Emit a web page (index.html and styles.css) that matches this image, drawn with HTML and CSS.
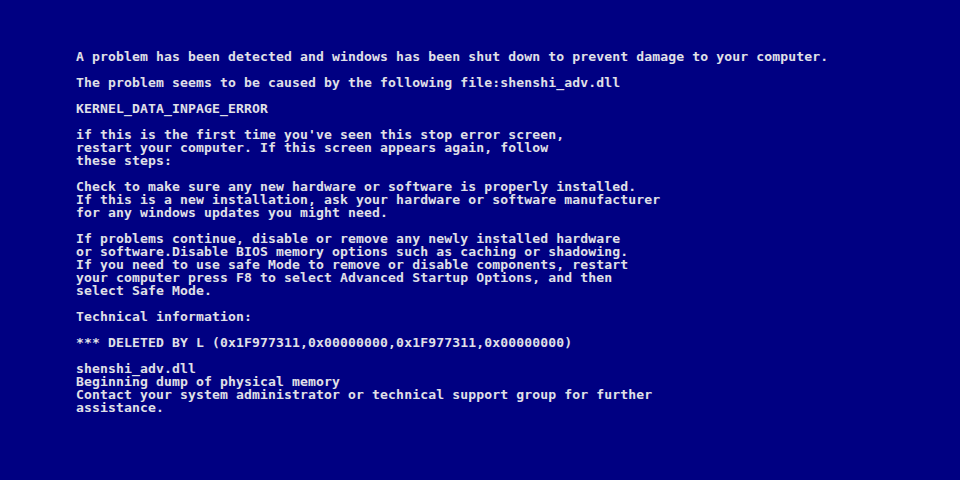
FILE: index.html
```html
<!DOCTYPE html>
<html>
<head>
<meta charset="utf-8">
<title>Stop error</title>
<link rel="stylesheet" href="styles.css">
</head>
<body>
<main class="screen">
<pre class="message">A problem has been detected and windows has been shut down to prevent damage to your computer.

The problem seems to be caused by the following file:shenshi_adv.dll

KERNEL_DATA_INPAGE_ERROR

if this is the first time you've seen this stop error screen,
restart your computer. If this screen appears again, follow
these steps:

Check to make sure any new hardware or software is properly installed.
If this is a new installation, ask your hardware or software manufacturer
for any windows updates you might need.

If problems continue, disable or remove any newly installed hardware
or software.Disable BIOS memory options such as caching or shadowing.
If you need to use safe Mode to remove or disable components, restart
your computer press F8 to select Advanced Startup Options, and then
select Safe Mode.

Technical information:

*** DELETED BY L (0x1F977311,0x00000000,0x1F977311,0x00000000)

shenshi_adv.dll
Beginning dump of physical memory
Contact your system administrator or technical support group for further
assistance.</pre>
</main>
</body>
</html>
```
FILE: styles.css
```css
html, body {
  margin: 0;
  padding: 0;
  background: #000082;
}
.screen {
  width: 960px;
  height: 480px;
  box-sizing: border-box;
  padding: 50px 0 0 76px;
  background: #000082;
  overflow: hidden;
}
.message {
  margin: 0;
  font-family: "DejaVu Sans Mono", "Liberation Mono", monospace;
  font-size: 13.1px;
  font-weight: bold;
  line-height: 13px;
  letter-spacing: 0.12px;
  color: #e0e0e8;
  white-space: pre;
}
```
